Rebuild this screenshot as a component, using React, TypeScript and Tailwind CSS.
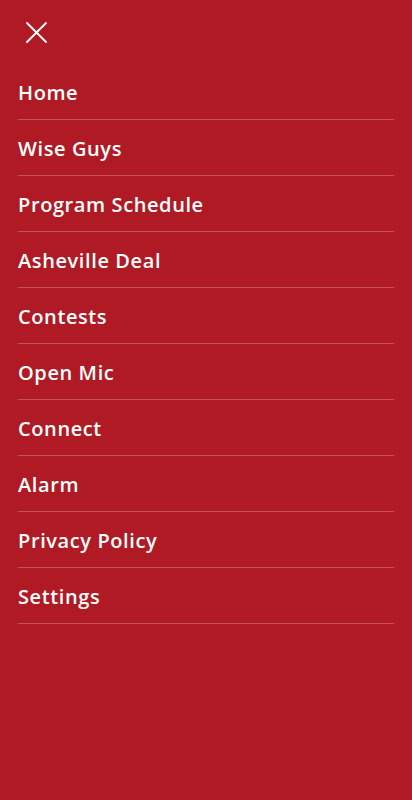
import React from "react";

const items = [
  "Home",
  "Wise Guys",
  "Program Schedule",
  "Asheville Deal",
  "Contests",
  "Open Mic",
  "Connect",
  "Alarm",
  "Privacy Policy",
  "Settings",
];

export default function App() {
  return (
    <div
      className="w-[412px] h-[800px] bg-[#AF1A24] text-white"
      style={{ fontFamily: '"Open Sans", "Noto Sans", sans-serif' }}
    >
      <div className="h-[64px] flex items-center pl-[26px]">
        <svg width="21" height="21" viewBox="0 0 21 21" fill="none">
          <path d="M1 1L20 20M20 1L1 20" stroke="#fff" strokeWidth="1.8" strokeLinecap="round" />
        </svg>
      </div>
      <ul className="mx-[18px]">
        {items.map((t) => (
          <li
            key={t}
            className="h-[56px] flex items-center pt-[3px] border-b border-[#c95158] text-[20px] font-semibold tracking-[0.6px] leading-none"
          >
            {t}
          </li>
        ))}
      </ul>
    </div>
  );
}
